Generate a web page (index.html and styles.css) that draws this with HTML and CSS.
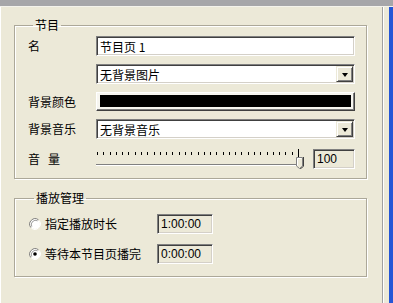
FILE: index.html
```html
<!DOCTYPE html>
<html lang="zh-CN">
<head>
    <meta charset="UTF-8">
    <title>节目页属性</title>
    <link rel="stylesheet" href="styles.css">
</head>
<body>

    <div class="top-strip"></div>

    <div class="frame">
        <div class="pane">

            <fieldset class="group group-page">
                <legend>节目</legend>

                <label class="lbl">名</label>
                <div class="edit">节目页 1</div>

                <span class="lbl"></span>
                <div class="combo">
                    <span class="combo-text">无背景图片</span>
                    <span class="combo-btn"><i class="tri"></i></span>
                </div>

                <label class="lbl">背景颜色</label>
                <div class="color-btn"><div class="swatch"></div></div>

                <label class="lbl">背景音乐</label>
                <div class="combo">
                    <span class="combo-text">无背景音乐</span>
                    <span class="combo-btn"><i class="tri"></i></span>
                </div>

                <label class="lbl lbl-volume"><span>音</span><span>量</span></label>
                <div class="volume">
                    <div class="slider">
                        <div class="ticks">
                            <i></i><i></i><i></i><i></i><i></i><i></i><i></i><i></i><i></i><i></i><i></i>
                            <i></i><i></i><i></i><i></i><i></i><i></i><i></i><i></i><i></i><i></i><i></i>
                            <i></i><i></i><i></i><i></i><i></i><i></i><i></i><i></i><i></i><i></i><i></i>
                        </div>
                        <div class="track"></div>
                        <!-- thumb sits over the track at max value -->
                        <svg class="thumb" width="8" height="20" viewBox="0 0 8 20">
                            <line x1="2.5" y1="0" x2="2.5" y2="8" stroke="#000"/>
                            <polygon points="0.5,8.5 6.5,8.5 6.5,17 3.5,19.5 0.5,17" fill="#ece9d8" stroke="#808080"/>
                            <polyline points="1.5,16.5 1.5,9.5 5.5,9.5" fill="none" stroke="#fff"/>
                            <polyline points="7.5,8 7.5,17.3 3.5,20.5" fill="none" stroke="#404040"/>
                        </svg>
                    </div>
                    <div class="edit edit-disabled volume-value">100</div>
                </div>
            </fieldset>

            <fieldset class="group group-play">
                <legend>播放管理</legend>

                <div class="radio-row">
                    <span class="radio">
                        <svg width="12" height="12" viewBox="0 0 12 12">
                            <circle cx="6" cy="6" r="5" fill="#fff"/>
                            <path d="M1.8 9.5 A5.5 5.5 0 0 1 9.5 1.8" fill="none" stroke="#808080"/>
                            <path d="M10.2 2.5 A5.5 5.5 0 0 1 2.5 10.2" fill="none" stroke="#fff"/>
                            <path d="M2.8 8.6 A4.3 4.3 0 0 1 8.6 2.8" fill="none" stroke="#404040" stroke-opacity="0.5"/>
                        </svg>
                    </span>
                    <span class="radio-label">指定播放时长</span>
                    <div class="edit edit-disabled time">1:00:00</div>
                </div>

                <div class="radio-row">
                    <span class="radio">
                        <svg width="12" height="12" viewBox="0 0 12 12">
                            <circle cx="6" cy="6" r="5" fill="#fff"/>
                            <path d="M1.8 9.5 A5.5 5.5 0 0 1 9.5 1.8" fill="none" stroke="#808080"/>
                            <path d="M10.2 2.5 A5.5 5.5 0 0 1 2.5 10.2" fill="none" stroke="#fff"/>
                            <path d="M2.8 8.6 A4.3 4.3 0 0 1 8.6 2.8" fill="none" stroke="#404040" stroke-opacity="0.5"/>
                            <circle cx="6" cy="6" r="1.8" fill="#000"/>
                        </svg>
                    </span>
                    <span class="radio-label">等待本节目页播完</span>
                    <div class="edit edit-disabled time">0:00:00</div>
                </div>
            </fieldset>

        </div>
        <div class="sep"></div>
        <div class="blue-edge"></div>
    </div>

</body>
</html>
```

FILE: styles.css
```css
body {
    margin: 0;
    background: #ece9d8;
    color: #000;
    font-family: "Noto Sans CJK SC", "Liberation Sans", sans-serif;
    font-size: 12px;
    width: 393px;
    height: 303px;
    overflow: hidden;
    display: flex;
    flex-direction: column;
}

.top-strip {
    height: 6px;
    background: #a6a6a9;
    border-bottom: 1px solid #f4f3ec;
    flex: none;
}

.frame {
    flex: 1;
    display: flex;
}

.pane {
    flex: 1;
    padding: 0 15px 0 14px;
    box-shadow: inset 1px 0 #fff;
}

.sep {
    width: 1px;
    border-left: 1px solid #a0a0a0;
    margin-right: 5px;
    background: #fff;
}

.blue-edge {
    width: 4px;
    background: #2456d6;
}

/* group boxes */
.group {
    margin: 0;
    min-width: 0;
    border: 1px solid #aca899;
    box-shadow: 1px 1px #fff, inset 1px 1px #fff;
}

    .group legend {
        margin-left: 5px;
        padding: 0 2px;
        line-height: 14px;
        font-size: 12px;
    }

.group-page {
    margin-top: 11px;
    padding: 4px 11px 11px 13px;
    display: grid;
    grid-template-columns: 68px 259px;
    grid-template-rows: 20px 20px 19px 20px 20px;
    row-gap: 8px;
    align-items: center;
}

.group-play {
    margin-top: 12px;
    padding: 9px 11px 12px 14px;
}

.lbl {
    line-height: 14px;
}

.lbl-volume {
    display: flex;
    gap: 8px;
    margin-top: 3px;
}

/* sunken edit */
.edit {
    box-sizing: border-box;
    height: 20px;
    background: #fff;
    border: 1px solid;
    border-color: #808080 #fff #fff #808080;
    box-shadow: inset 1px 1px #404040, inset -1px -1px #d4d0c8;
    padding: 2px 3px 0 3px;
    line-height: 15px;
    white-space: nowrap;
    overflow: hidden;
}

.edit-disabled {
    background: #ece9d8;
    font-family: "Liberation Sans", sans-serif;
    font-size: 12px;
}

/* combo box */
.combo {
    box-sizing: border-box;
    height: 20px;
    display: flex;
    background: #fff;
    border: 1px solid;
    border-color: #808080 #fff #fff #808080;
    box-shadow: inset 1px 1px #404040, inset -1px -1px #d4d0c8;
    padding: 1px;
}

.combo-text {
    flex: 1;
    padding: 1px 0 0 2px;
    line-height: 15px;
}

.combo-btn {
    box-sizing: border-box;
    width: 17px;
    background: #ece9d8;
    border: 1px solid;
    border-color: #ece9d8 #404040 #404040 #ece9d8;
    box-shadow: inset 1px 1px #fff, inset -1px -1px #808080;
    display: flex;
    align-items: center;
    justify-content: center;
}

.tri {
    width: 0;
    height: 0;
    border-left: 3.5px solid transparent;
    border-right: 3.5px solid transparent;
    border-top: 4px solid #000;
    margin-top: 1px;
}

/* colour button */
.color-btn {
    box-sizing: border-box;
    height: 19px;
    border: 1px solid;
    border-color: #fff #404040 #404040 #fff;
    box-shadow: inset -1px -1px #808080;
    padding: 2px 3px 3px 3px;
    background: #f7f6f0;
}

.swatch {
    height: 100%;
    background: #000;
}

/* volume slider */
.volume {
    display: flex;
    gap: 10px;
    margin-top: 3px;
}

.slider {
    position: relative;
    width: 207px;
    height: 20px;
}

.ticks {
    margin: 3px 0 0 1px;
    width: 202px;
    height: 3px;
    display: flex;
    justify-content: space-between;
}

    .ticks i {
        width: 1px;
        background: #000;
    }

.track {
    margin-top: 9px;
    height: 1px;
    background: #808080;
    border-bottom: 1px solid #fff;
    box-shadow: inset 0 0 0 0 #404040;
}

.thumb {
    position: absolute;
    left: 200px;
    top: 0;
}

.volume-value {
    width: 42px;
}

/* radio rows */
.radio-row {
    display: flex;
    align-items: center;
    height: 20px;
}

    .radio-row + .radio-row {
        margin-top: 10px;
    }

.radio {
    width: 16px;
    height: 12px;
    display: flex;
}

.radio-label {
    width: 112px;
    line-height: 14px;
}

.time {
    width: 56px;
    padding-left: 3px;
}
```
